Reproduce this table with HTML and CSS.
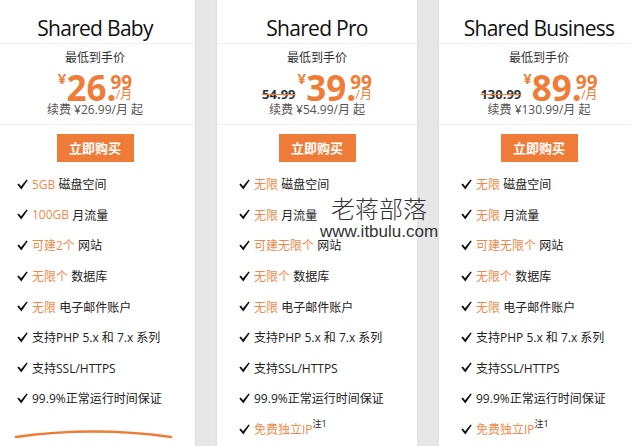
FILE: index.html
```html
<!DOCTYPE html>
<html lang="zh">
<head>
<meta charset="utf-8">
<title>Shared Hosting</title>
<link rel="stylesheet" href="styles.css">
</head>
<body>
<div class="plans">
  <section class="card">
    <div class="head"><h2 class="title">Shared Baby</h2></div>
    <div class="pricebox">
      <div class="label">最低到手价</div>
      <div class="price">
        <span class="cur">¥</span><span class="int">26.</span><span class="dec"><span class="cents">99</span><span class="per">/月</span></span>
      </div>
      <div class="renew">续费 ¥26.99/月 起</div>
    </div>
    <div class="action"><a class="btn">立即购买</a></div>
    <ul class="feats">
      <li><svg class="chk" viewBox="0 0 11 11"><path d="M0.3 5.6 L1.9 4.6 L4 7.3 L9.6 0.4 L10.7 1.3 L4.3 10.4 Z"/></svg><span class="hl">5GB</span> 磁盘空间</li>
      <li><svg class="chk" viewBox="0 0 11 11"><path d="M0.3 5.6 L1.9 4.6 L4 7.3 L9.6 0.4 L10.7 1.3 L4.3 10.4 Z"/></svg><span class="hl">100GB</span> 月流量</li>
      <li><svg class="chk" viewBox="0 0 11 11"><path d="M0.3 5.6 L1.9 4.6 L4 7.3 L9.6 0.4 L10.7 1.3 L4.3 10.4 Z"/></svg><span class="hl">可建2个</span> 网站</li>
      <li><svg class="chk" viewBox="0 0 11 11"><path d="M0.3 5.6 L1.9 4.6 L4 7.3 L9.6 0.4 L10.7 1.3 L4.3 10.4 Z"/></svg><span class="hl">无限个</span> 数据库</li>
      <li><svg class="chk" viewBox="0 0 11 11"><path d="M0.3 5.6 L1.9 4.6 L4 7.3 L9.6 0.4 L10.7 1.3 L4.3 10.4 Z"/></svg><span class="hl">无限</span> 电子邮件账户</li>
      <li><svg class="chk" viewBox="0 0 11 11"><path d="M0.3 5.6 L1.9 4.6 L4 7.3 L9.6 0.4 L10.7 1.3 L4.3 10.4 Z"/></svg>支持PHP 5.x 和 7.x 系列</li>
      <li><svg class="chk" viewBox="0 0 11 11"><path d="M0.3 5.6 L1.9 4.6 L4 7.3 L9.6 0.4 L10.7 1.3 L4.3 10.4 Z"/></svg>支持SSL/HTTPS</li>
      <li><svg class="chk" viewBox="0 0 11 11"><path d="M0.3 5.6 L1.9 4.6 L4 7.3 L9.6 0.4 L10.7 1.3 L4.3 10.4 Z"/></svg>99.9%正常运行时间保证</li>
    </ul>
    <svg class="swoosh" viewBox="0 0 200 16"><path d="M21 12 Q98 1 176 12"/></svg>
  </section>

  <section class="card">
    <div class="head"><h2 class="title">Shared Pro</h2></div>
    <div class="pricebox">
      <div class="label">最低到手价</div>
      <div class="price">
        <s class="old">54.99</s><span class="cur">¥</span><span class="int">39.</span><span class="dec"><span class="cents">99</span><span class="per">/月</span></span>
      </div>
      <div class="renew">续费 ¥54.99/月 起</div>
    </div>
    <div class="action"><a class="btn">立即购买</a></div>
    <ul class="feats">
      <li><svg class="chk" viewBox="0 0 11 11"><path d="M0.3 5.6 L1.9 4.6 L4 7.3 L9.6 0.4 L10.7 1.3 L4.3 10.4 Z"/></svg><span class="hl">无限</span> 磁盘空间</li>
      <li><svg class="chk" viewBox="0 0 11 11"><path d="M0.3 5.6 L1.9 4.6 L4 7.3 L9.6 0.4 L10.7 1.3 L4.3 10.4 Z"/></svg><span class="hl">无限</span> 月流量</li>
      <li><svg class="chk" viewBox="0 0 11 11"><path d="M0.3 5.6 L1.9 4.6 L4 7.3 L9.6 0.4 L10.7 1.3 L4.3 10.4 Z"/></svg><span class="hl">可建无限个</span> 网站</li>
      <li><svg class="chk" viewBox="0 0 11 11"><path d="M0.3 5.6 L1.9 4.6 L4 7.3 L9.6 0.4 L10.7 1.3 L4.3 10.4 Z"/></svg><span class="hl">无限个</span> 数据库</li>
      <li><svg class="chk" viewBox="0 0 11 11"><path d="M0.3 5.6 L1.9 4.6 L4 7.3 L9.6 0.4 L10.7 1.3 L4.3 10.4 Z"/></svg><span class="hl">无限</span> 电子邮件账户</li>
      <li><svg class="chk" viewBox="0 0 11 11"><path d="M0.3 5.6 L1.9 4.6 L4 7.3 L9.6 0.4 L10.7 1.3 L4.3 10.4 Z"/></svg>支持PHP 5.x 和 7.x 系列</li>
      <li><svg class="chk" viewBox="0 0 11 11"><path d="M0.3 5.6 L1.9 4.6 L4 7.3 L9.6 0.4 L10.7 1.3 L4.3 10.4 Z"/></svg>支持SSL/HTTPS</li>
      <li><svg class="chk" viewBox="0 0 11 11"><path d="M0.3 5.6 L1.9 4.6 L4 7.3 L9.6 0.4 L10.7 1.3 L4.3 10.4 Z"/></svg>99.9%正常运行时间保证</li>
      <li><svg class="chk" viewBox="0 0 11 11"><path d="M0.3 5.6 L1.9 4.6 L4 7.3 L9.6 0.4 L10.7 1.3 L4.3 10.4 Z"/></svg><span class="hl">免费独立IP</span> <sup class="note">注1</sup></li>
    </ul>
  </section>

  <section class="card">
    <div class="head"><h2 class="title">Shared Business</h2></div>
    <div class="pricebox">
      <div class="label">最低到手价</div>
      <div class="price">
        <s class="old">130.99</s><span class="cur">¥</span><span class="int">89.</span><span class="dec"><span class="cents">99</span><span class="per">/月</span></span>
      </div>
      <div class="renew">续费 ¥130.99/月 起</div>
    </div>
    <div class="action"><a class="btn">立即购买</a></div>
    <ul class="feats">
      <li><svg class="chk" viewBox="0 0 11 11"><path d="M0.3 5.6 L1.9 4.6 L4 7.3 L9.6 0.4 L10.7 1.3 L4.3 10.4 Z"/></svg><span class="hl">无限</span> 磁盘空间</li>
      <li><svg class="chk" viewBox="0 0 11 11"><path d="M0.3 5.6 L1.9 4.6 L4 7.3 L9.6 0.4 L10.7 1.3 L4.3 10.4 Z"/></svg><span class="hl">无限</span> 月流量</li>
      <li><svg class="chk" viewBox="0 0 11 11"><path d="M0.3 5.6 L1.9 4.6 L4 7.3 L9.6 0.4 L10.7 1.3 L4.3 10.4 Z"/></svg><span class="hl">可建无限个</span> 网站</li>
      <li><svg class="chk" viewBox="0 0 11 11"><path d="M0.3 5.6 L1.9 4.6 L4 7.3 L9.6 0.4 L10.7 1.3 L4.3 10.4 Z"/></svg><span class="hl">无限个</span> 数据库</li>
      <li><svg class="chk" viewBox="0 0 11 11"><path d="M0.3 5.6 L1.9 4.6 L4 7.3 L9.6 0.4 L10.7 1.3 L4.3 10.4 Z"/></svg><span class="hl">无限</span> 电子邮件账户</li>
      <li><svg class="chk" viewBox="0 0 11 11"><path d="M0.3 5.6 L1.9 4.6 L4 7.3 L9.6 0.4 L10.7 1.3 L4.3 10.4 Z"/></svg>支持PHP 5.x 和 7.x 系列</li>
      <li><svg class="chk" viewBox="0 0 11 11"><path d="M0.3 5.6 L1.9 4.6 L4 7.3 L9.6 0.4 L10.7 1.3 L4.3 10.4 Z"/></svg>支持SSL/HTTPS</li>
      <li><svg class="chk" viewBox="0 0 11 11"><path d="M0.3 5.6 L1.9 4.6 L4 7.3 L9.6 0.4 L10.7 1.3 L4.3 10.4 Z"/></svg>99.9%正常运行时间保证</li>
      <li><svg class="chk" viewBox="0 0 11 11"><path d="M0.3 5.6 L1.9 4.6 L4 7.3 L9.6 0.4 L10.7 1.3 L4.3 10.4 Z"/></svg><span class="hl">免费独立IP</span> <sup class="note">注1</sup></li>
    </ul>
  </section>
</div>
<div class="watermark">
  <div class="wm-cn">老蒋部落</div>
  <div class="wm-url">www.itbulu.com</div>
</div>
</body>
</html>
```

FILE: styles.css
```css
html, body {
  margin: 0;
  padding: 0;
  height: 100%;
  overflow: hidden;
}
body {
  background: #e7e7e7;
  font-family: "Open Sans", "Noto Sans CJK SC", sans-serif;
  color: #222;
  position: relative;
}
.plans {
  display: flex;
  gap: 22px;
  margin-left: -5px;
  height: 100%;
}
.card {
  flex: 0 0 200px;
  width: 200px;
  background: #fff;
  box-shadow: 0 0 3px rgba(0,0,0,0.08);
  display: flex;
  flex-direction: column;
}
.head {
  height: 43px;
  border-bottom: 1px solid #f1f1f1;
  display: flex;
  align-items: flex-end;
  justify-content: center;
}
.title {
  margin: 0;
  font-weight: 400;
  font-size: 21px;
  line-height: 30px;
  color: #111;
  letter-spacing: -0.7px;
}
.pricebox {
  height: 81px;
  border-bottom: 1px solid #f1f1f1;
  display: flex;
  flex-direction: column;
  align-items: center;
  padding-top: 6px;
  box-sizing: border-box;
}
.label {
  font-size: 12px;
  line-height: 16px;
  color: #333;
}
.price {
  display: flex;
  align-items: flex-start;
  height: 34px;
  color: #ef7d37;
  margin-top: 2px;
}
.old {
  font-size: 13px;
  font-weight: 700;
  color: #333;
  text-decoration: line-through;
  text-decoration-color: #ef7d37;
  text-decoration-thickness: 1px;
  margin-top: 17px;
  margin-right: 2px;
}
.cur {
  font-size: 15px;
  font-weight: 700;
  line-height: 18px;
  margin-top: 1px;
}
.int {
  font-size: 35px;
  font-weight: 700;
  line-height: 34px;
  margin-top: 3px;
}
.dec {
  display: flex;
  flex-direction: column;
  align-items: flex-end;
  margin-left: -6px;
}
.cents {
  font-size: 19px;
  font-weight: 700;
  line-height: 18px;
  margin-top: 5px;
}
.per {
  font-size: 12px;
  line-height: 14px;
  margin-top: -3px;
}
.renew {
  font-size: 12px;
  line-height: 16px;
  color: #555;
  margin-top: 0;
}
.action {
  display: flex;
  justify-content: center;
  padding-top: 9px;
}
.btn {
  display: block;
  width: 77px;
  height: 28px;
  line-height: 28px;
  text-align: center;
  background: #ee7c38;
  color: #fff;
  font-size: 13px;
  font-weight: 700;
}
.feats {
  list-style: none;
  margin: 7px 0 0;
  padding: 0 0 0 22px;
  flex: none;
}
.feats li {
  height: 30.6px;
  display: flex;
  align-items: center;
  font-size: 12px;
  color: #222;
  white-space: pre;
}
.chk {
  width: 11px;
  height: 11px;
  margin-right: 4px;
  fill: #111;
  flex: none;
}
.hl {
  color: #f08a4c;
}
.note {
  font-size: 9px;
  align-self: flex-start;
  margin-top: 5px;
  line-height: 10px;
  color: #222;
}
.swoosh {
  display: block;
  width: 200px;
  height: 16px;
  margin-top: 11px;
  flex: none;
  fill: none;
  stroke: #ef7d37;
  stroke-width: 2.6;
  stroke-linecap: round;
}
.watermark {
  position: absolute;
  left: 320px;
  top: 194px;
  color: #333;
  text-align: center;
}
.wm-cn {
  font-family: "Noto Sans CJK SC", sans-serif;
  font-size: 24px;
  line-height: 28px;
  font-weight: 300;
}
.wm-url {
  font-family: "Liberation Sans", sans-serif;
  font-size: 17px;
  line-height: 20px;
}
```
